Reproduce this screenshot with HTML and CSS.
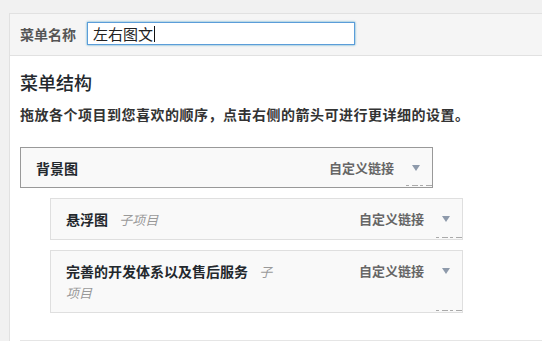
FILE: index.html
```html
<!DOCTYPE html>
<html lang="zh-CN">
<head>
    <meta charset="UTF-8">
    <title>菜单</title>
    <link rel="stylesheet" href="styles.css">
</head>
<body>
    <div class="menu-panel">
        <div class="menu-header">
            <label class="menu-label">菜单名称</label>
            <div class="name-input">左右图文<span class="caret"></span></div>
        </div>
        <div class="menu-body">
            <h3 class="menu-title">菜单结构</h3>
            <p class="menu-hint">拖放各个项目到您喜欢的顺序，点击右侧的箭头可进行更详细的设置。</p>

            <ul class="menu-items">
                <li class="menu-item active">
                    <span class="item-title">背景图</span>
                    <span class="item-controls">
                        <span class="item-type">自定义链接</span>
                        <span class="item-arrow"></span>
                    </span>
                    <span class="item-dots"></span>
                </li>
                <li class="menu-item sub">
                    <span class="item-title">悬浮图 <em class="is-sub">子项目</em></span>
                    <span class="item-controls">
                        <span class="item-type">自定义链接</span>
                        <span class="item-arrow"></span>
                    </span>
                    <span class="item-dots"></span>
                </li>
                <li class="menu-item sub">
                    <span class="item-title">完善的开发体系以及售后服务 <em class="is-sub">子项目</em></span>
                    <span class="item-controls">
                        <span class="item-type">自定义链接</span>
                        <span class="item-arrow"></span>
                    </span>
                    <span class="item-dots"></span>
                </li>
            </ul>
        </div>
        <div class="menu-footer"></div>
    </div>
</body>
</html>
```

FILE: styles.css
```css
body {
    margin: 0;
    padding: 13px 0 0 9px;
    background-color: #f1f1f1;
    font-family: "Noto Sans CJK SC", "Liberation Sans", sans-serif;
    color: #23282d;
    overflow: hidden;
}

.menu-panel {
    background-color: #fff;
    border: 1px solid #e1e1e1;
    border-right: none;
}

/* header with the name field */
.menu-header {
    display: flex;
    align-items: center;
    background-color: #f5f5f5;
    border-bottom: 1px solid #e1e1e1;
    padding: 8px 10px 10px;
}

.menu-label {
    font-size: 14px;
    font-weight: bold;
    color: #555;
    margin-right: 11px;
    line-height: 20px;
}

.name-input {
    box-sizing: border-box;
    width: 268px;
    height: 23px;
    border: 1px solid #5b9dd9;
    box-shadow: 0 0 2px rgba(30, 140, 190, 0.8);
    background-color: #fff;
    font-size: 15px;
    line-height: 21px;
    padding: 0 5px;
    color: #222;
    display: flex;
    align-items: center;
}

.caret {
    display: inline-block;
    width: 1px;
    height: 16px;
    background-color: #111;
    margin-left: 1px;
}

/* body */
.menu-body {
    padding: 14px 10px 0;
}

.menu-title {
    margin: 0;
    font-size: 18px;
    font-weight: 500;
    line-height: 24px;
}

.menu-hint {
    margin: 10px 0 0;
    font-size: 14px;
    font-weight: bold;
    line-height: 20px;
    letter-spacing: 0.5px;
    color: #333;
}

.menu-items {
    list-style: none;
    margin: 23px 0 0;
    padding: 0;
}

.menu-item {
    position: relative;
    box-sizing: border-box;
    width: 413px;
    display: flex;
    justify-content: space-between;
    align-items: flex-start;
    background-color: #f9f9f9;
    border: 1px solid #dfdfdf;
    padding: 10px 12px 9px 15px;
    margin-bottom: 10px;
    font-size: 14px;
    line-height: 20px;
}

.menu-item.active {
    border-color: #999;
}

.menu-item.sub {
    margin-left: 30px;
}

.item-title {
    font-weight: bold;
    color: #23282d;
    max-width: 212px;
}

.is-sub {
    font-weight: normal;
    font-size: 13px;
    line-height: 20px;
    color: #999;
    margin-left: 8px;
}

.item-controls {
    display: flex;
    align-items: center;
    height: 20px;
}

.item-type {
    font-size: 13px;
    font-weight: bold;
    color: #666;
}

.item-arrow {
    width: 0;
    height: 0;
    border-left: 4px solid transparent;
    border-right: 4px solid transparent;
    border-top: 6px solid #8e9aab;
    margin-left: 18px;
}

/* leftover dotted edge at bottom right */
.item-dots {
    position: absolute;
    right: 0;
    bottom: 1px;
    width: 26px;
    height: 1px;
    background: repeating-linear-gradient(90deg, #aaa 0 3px, transparent 3px 6px, #aaa 6px 12px, transparent 12px 14px);
}

.menu-footer {
    margin: 27px 0 0 10px;
    border-top: 1px solid #e5e5e5;
    height: 10px;
}
```
